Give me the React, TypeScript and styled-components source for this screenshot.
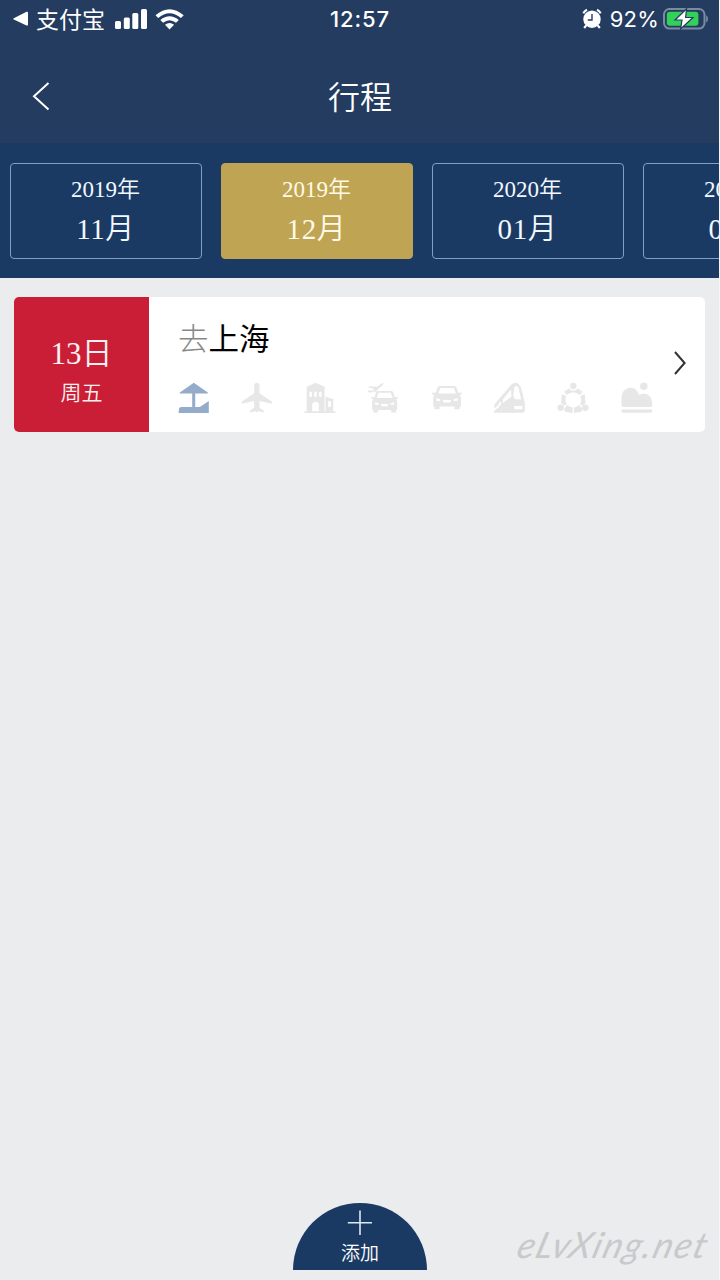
import React from 'react';
import styled, { createGlobalStyle } from 'styled-components';

const cjk = '"Noto Sans CJK SC", sans-serif';
const cjkSoft = '"Noto Sans CJK SC DemiLight", "Noto Sans CJK SC", sans-serif';

const GlobalStyle = createGlobalStyle`
  * { box-sizing: border-box; }
  body { margin: 0; background: #f4f6f8; }
  svg { display: block; flex: none; }
`;

const Page = styled.div`
  width: 719px;
  height: 1280px;
  display: flex;
  flex-direction: column;
  background: #eaecee;
  overflow: hidden;
  font-family: "Liberation Serif", ${cjk};
`;

const Header = styled.header`
  height: 143px;
  flex: none;
  background: #233c60;
  color: #fff;
`;

const StatusBar = styled.div`
  height: 38px;
  display: grid;
  grid-template-columns: 1fr auto 1fr;
  align-items: center;
  padding: 0 11px 0 13px;
  font: 500 22px/38px Inter, ${cjk};
`;

const StatusGroup = styled.div<{ $end?: boolean }>`
  display: flex;
  align-items: center;
  justify-content: ${p => (p.$end ? 'flex-end' : 'flex-start')};
`;

const Carrier = styled.span`
  margin: 0 10px 0 7px;
  padding-bottom: 2px;
  font: 400 23px/36px ${cjk};
`;

const Clock = styled.span`
  margin-right: 1px;
  font-weight: 450;
  letter-spacing: 0.9px;
`;

const Battery = styled.span`
  margin: 0 4px 0 8px;
  font-weight: 400;
  letter-spacing: 0.2px;
`;

const TitleBar = styled.div`
  height: 105px;
  display: grid;
  grid-template-columns: 60px 1fr 60px;
  align-items: center;
`;

const BackButton = styled.button`
  padding: 10px 0 0 32px;
  border: 0;
  background: none;
`;

const Title = styled.h1`
  margin: 8px 0 0 1px;
  text-align: center;
  font: 350 32px/48px ${cjkSoft};
`;

const MonthStrip = styled.nav`
  height: 135px;
  flex: none;
  display: flex;
  gap: 19px;
  padding: 20px 0 0 10px;
  background: #1b3a63;
  overflow: hidden;
`;

const Month = styled.button<{ $active?: boolean }>`
  width: 192px;
  height: 96px;
  flex: none;
  display: flex;
  flex-direction: column;
  align-items: center;
  padding: 10px 1px 0 0;
  border: 1px solid ${p => (p.$active ? '#bfa553' : '#7d9fc9')};
  border-radius: 4px;
  background: ${p => (p.$active ? '#bfa553' : 'transparent')};
  color: ${p => (p.$active ? '#fffbe8' : '#f2f8ff')};
  font-family: "Liberation Serif", ${cjkSoft};
  font-weight: 350;
`;

const Year = styled.span`
  font-size: 23px;
  line-height: 32px;
`;

const MonthName = styled.span`
  font-size: 29px;
  line-height: 46px;
  letter-spacing: 0.6px;
`;

const Content = styled.main`
  flex: 1;
  padding: 19px 14px 0;
`;

const TripCard = styled.article`
  height: 135px;
  display: flex;
  border-radius: 5px;
  background: #fff;
  overflow: hidden;
`;

const DateBlock = styled.div`
  width: 135px;
  display: flex;
  flex-direction: column;
  align-items: center;
  padding-top: 35px;
  background: #c91e35;
  color: #fff0f3;
  font-family: "Liberation Serif", ${cjkSoft};
  font-weight: 350;
`;

const Day = styled.span`
  font-size: 31px;
  line-height: 43px;
`;

const Weekday = styled.span`
  font: 350 21px/32px ${cjkSoft};
`;

const TripBody = styled.div`
  flex: 1;
  padding: 16px 0 0 28px;
`;

const Destination = styled.h2`
  margin: 0 0 0 1px;
  color: #000;
  font: 400 30.5px/48px ${cjk};
`;

const Prefix = styled.span`
  color: #888;
  font-weight: 300;
`;

const Services = styled.div`
  display: flex;
  gap: 31.3px;
  margin: 21px 0 0 0.5px;
`;

const ServiceIcon = styled.svg<{ $active?: boolean }>`
  width: 32px;
  height: 32px;
  color: ${p => (p.$active ? '#94abc9' : '#e7e7e8')};
`;

const OpenTrip = styled.div`
  display: flex;
  align-items: center;
  padding: 0 18px 4px 0;
`;

const Footer = styled.footer`
  height: 77px;
  display: grid;
  grid-template-columns: 1fr 134px 1fr;
  padding-left: 1px;
`;

const AddButton = styled.button`
  grid-column: 2;
  height: 67px;
  display: flex;
  flex-direction: column;
  align-items: center;
  padding: 7px 0 0;
  border: 0;
  border-radius: 67px 67px 0 0;
  background: #1b3a63;
  color: #fff;
  font: 350 19px/32px ${cjkSoft};
`;

const Brand = styled.span`
  justify-self: end;
  margin: 19px 12px 0 0;
  color: #c8c9ca;
  font: italic 400 36px/44px "Z003", "Brush Script MT", Lato, sans-serif;
  letter-spacing: 1.8px;
  white-space: nowrap;
  transform: skewX(-16deg);
`;

const months = [
  { year: '2019年', month: '11月' },
  { year: '2019年', month: '12月', active: true },
  { year: '2020年', month: '01月' },
  { year: '2020年', month: '02月' },
];

const CarShape = () => (
  <>
    <path fillRule="evenodd" fill="currentColor" d="M8 0H22Q24 0 24.5 1.5L26.3 6.8 29.6 6.4V8.6L27.6 9Q29 10.3 29 12V20.5H27.6V23.3H22.4V20.5H7.6V23.3H2.4V20.5H1.2V12Q1.2 10 2.6 9L.3 8.4V6.5L3.8 6.8 5.5 1.5Q6 0 8 0ZM8.2 2 6.2 7.6H23.9L21.9 2Z" />
    <path fill="#fff" d="M4.2 12.2 8.4 13.2V15H4.6ZM25.8 12.2 21.6 13.2V15H25.4ZM10.8 14H19.2L18.4 16.6H11.6Z" />
  </>
);

const services = [
  <path fill="currentColor" d="M15.8.7 29.8 10.4V11.4H17.2V25H21.8L30.8 19V31H.5L1.2 26 3 25H14.2V11.4H1.8V10.4Z" />,
  <path fill="currentColor" d="M15.8.7C17.5.7 18.5 2.4 18.5 4V11.3L30.5 19.3Q31.4 20.1 31.2 21.8L18.5 19V25.7L22.8 28.8 23.2 30.6 16.9 29.2 15.8 30.5 14.7 29.2 8.5 30.6 8.8 28.8 13.2 25.7V19L.6 21.8Q.2 20.3 1.3 19.3L13.2 11.3V4C13.2 2.4 14.2.7 15.8.7Z" />,
  <path fill="currentColor" fillRule="evenodd" d="M2.7 4.7 11.5.8 20.6 4.7V29.3H21.5V14.7L29.2 17V29.3H31.4V30.9H.5V29.3H2.7ZM5.4 10.6V14.8H7.9V10.6Q6.6 8.4 5.4 10.6ZM10.2 10.6V14.8H12.8V10.6Q11.5 8.4 10.2 10.6ZM15.1 10.6V14.8H17.6V10.6Q16.4 8.4 15.1 10.6ZM8.2 29.3H14.9V22.5Q14.4 19.8 11.6 19.7 8.6 19.8 8.2 22.5ZM24.2 18.8V25H27V19.6Z" />,
  <>
    <path fill="currentColor" d="M.3 8.8 2 8.4 4.8 8.8 7.4 7 1 5.2 2.2 4.2 10.4 4.8 14.3 1.6Q16.1.6 16.5 1.2 17 2.2 14.8 4L11.6 6.6 8.8 10.2H7.2L8.2 8.2 5.1 10.4 1.8 10.6Z" />
    <g transform="translate(4.1 8.9) scale(.9 .93)"><CarShape /></g>
  </>,
  <g transform="translate(1 4)"><CarShape /></g>,
  <>
    <path fill="currentColor" d="M.4 22.6 16.8 3Q20.5-.6 24 1.4 26.2 3 27.4 7L30.8 21V28Q30.8 30.7 28.4 30.7H0L.4 28.6 5 25.3V22.2L.4 26.4Z" />
    <path fill="#fff" d="M20.4 5.2Q23.3 2.6 24.6 6.2L27.2 17.2H21L19.2 13.8ZM17 7.6 17.4 14.8 8.8 20.9V17.4ZM7 19.2V22.4L5 23.9V21.2ZM20.2 24H28.4V27.2H20.2Z" />
  </>,
  <>
    <g fill="currentColor"><circle cx="16.3" cy="4" r="3.2" /><circle cx="3.6" cy="25.7" r="3.2" /><circle cx="28.4" cy="25.7" r="3.2" /></g>
    <g fill="currentColor">
      <path d="M11.8 6.6 14.2 8.4H18.4L20.8 6.6 25.6 9.8 22.8 13Q16.3 7.4 9.8 13L7 9.8Z" />
      <path d="M5 12 9.2 14.2Q7.2 18.4 9.8 22L7 23.8 4 20.8Z" />
      <path d="M27.6 12 23.4 14.2Q25.4 18.4 22.8 22L25.6 23.8 28.6 20.8Z" />
      <path d="M10.5 22.9Q12.5 25.1 15.6 25.5V31L7.8 29.8 7.3 26.6Z" />
      <path d="M22.1 22.9Q20.1 25.1 17 25.5V31L24.8 29.8 25.3 26.6Z" />
    </g>
  </>,
  <g fill="currentColor"><circle cx="22.8" cy="4.3" r="3.8" /><path d="M2.4 25Q.5 25 .5 22.8V16C.5 10 4.6 5.8 9.6 5.8 13.6 5.8 16.5 8.2 18 13 21 11.5 25.3 11.1 28 13.8 30.7 16 31.2 19.2 31.2 23Q31.2 25 29.4 25Z" /><path d="M.5 27.5H31.2V29.2Q31.2 30.8 29.5 30.8H2Q.5 30.8.5 29.2Z" /></g>,
];

export default function App() {
  return (
    <Page>
      <GlobalStyle />
      <Header>
        <StatusBar>
          <StatusGroup>
            <svg width="16" height="16" viewBox="0 0 16 16"><path d="M.8 7.2 13.5.8Q15 .3 15 2V13.4Q15 15 13.5 14.5L.8 8.6Q-.3 7.9.8 7.2Z" fill="#fff" /></svg>
            <Carrier>支付宝</Carrier>
            <svg width="69" height="24" viewBox="0 0 69 24" fill="#fff">
              <rect x="0" y="14" width="6" height="8" rx="1.5" />
              <rect x="8.8" y="10.5" width="6" height="11.5" rx="1.5" />
              <rect x="17.3" y="6" width="6" height="16" rx="1.5" />
              <rect x="26" y="2" width="6" height="20" rx="1.5" />
              <path d="M40.5 8.2Q54.5-3.8 68.7 8.2L66 11Q54.5 1.3 43.2 11ZM45.3 13Q54.5 5.5 63.8 13L61 15.8Q54.5 10.5 48.1 15.8ZM50 17.8Q54.5 14.1 59.1 17.8L54.5 22.6Z" />
            </svg>
          </StatusGroup>
          <Clock>12:57</Clock>
          <StatusGroup $end>
            <svg width="20" height="22" viewBox="0 0 20 22">
              <circle cx="10" cy="11.2" r="8.7" fill="#fff" />
              <path d="M4.2 17.4 2.2 20M15.8 17.4 17.8 20" stroke="#fff" strokeWidth="2.2" />
              <path d="M1.4 5.4Q2.4 2.8 5 1.8M18.6 5.4Q17.6 2.8 15 1.8" fill="none" stroke="#fff" strokeWidth="2.2" />
              <path d="M10 6V12H5.8" fill="none" stroke="#233c60" strokeWidth="1.4" />
            </svg>
            <Battery>92%</Battery>
            <svg width="45" height="22" viewBox="0 0 45 22">
              <rect x="1" y="1" width="40.5" height="19.6" rx="5.5" fill="none" stroke="#7c8ba2" strokeWidth="2" />
              <path d="M43.2 7.3Q45 8.2 45 10.9T43.2 14.5Z" fill="#7c8ba2" />
              <rect x="3.8" y="3.8" width="31.6" height="14" rx="3" fill="#32d158" />
              <path d="M23.6 .8 12 12H19L17.6 21 30 9.5H22.6Z" fill="#fff" stroke="#233c60" strokeWidth="1.2" />
            </svg>
          </StatusGroup>
        </StatusBar>
        <TitleBar>
          <BackButton aria-label="返回">
            <svg width="20" height="30" viewBox="0 0 20 30"><path d="M16.5 2 2 15.3 16.5 28.5" fill="none" stroke="#fff" strokeWidth="2" /></svg>
          </BackButton>
          <Title>行程</Title>
        </TitleBar>
      </Header>
      <MonthStrip>
        {months.map(m => (
          <Month key={m.year + m.month} $active={m.active}>
            <Year>{m.year}</Year>
            <MonthName>{m.month}</MonthName>
          </Month>
        ))}
      </MonthStrip>
      <Content>
        <TripCard>
          <DateBlock>
            <Day>13日</Day>
            <Weekday>周五</Weekday>
          </DateBlock>
          <TripBody>
            <Destination><Prefix>去</Prefix>上海</Destination>
            <Services>
              {services.map((shape, i) => (
                <ServiceIcon key={i} viewBox="0 0 32 32" $active={i === 0}>{shape}</ServiceIcon>
              ))}
            </Services>
          </TripBody>
          <OpenTrip>
            <svg width="14" height="26" viewBox="0 0 14 26"><path d="M2 2 11.6 13 2 24" fill="none" stroke="#333" strokeWidth="2" /></svg>
          </OpenTrip>
        </TripCard>
      </Content>
      <Footer>
        <AddButton>
          <svg width="26" height="26" viewBox="0 0 26 26"><path d="M13 .5V25M.8 12.8H25" stroke="#dce8f5" strokeWidth="1.6" /></svg>
          添加
        </AddButton>
        <Brand>eLvXing.net</Brand>
      </Footer>
    </Page>
  );
}
